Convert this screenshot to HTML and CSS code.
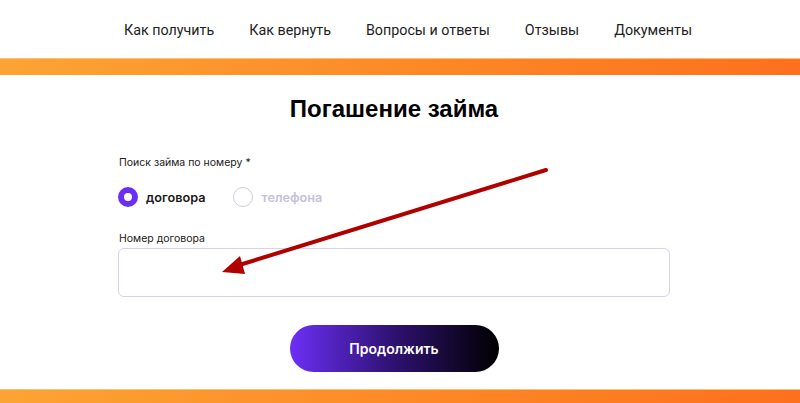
FILE: index.html
```html
<!DOCTYPE html>
<html lang="ru">
<head>
<meta charset="utf-8">
<link rel="stylesheet" href="styles.css">
</head>
<body>
<header class="header">
  <nav class="nav">
    <a class="nav-link">Как получить</a>
    <a class="nav-link">Как вернуть</a>
    <a class="nav-link">Вопросы и ответы</a>
    <a class="nav-link">Отзывы</a>
    <a class="nav-link">Документы</a>
  </nav>
</header>
<div class="bar"></div>
<main class="main">
  <h1 class="title">Погашение займа</h1>
  <div class="form">
    <div class="label">Поиск займа по номеру *</div>
    <div class="radios">
      <label class="radio checked"><span class="dot"></span><span class="radio-text">договора</span></label>
      <label class="radio"><span class="dot"></span><span class="radio-text">телефона</span></label>
    </div>
    <div class="label label-input">Номер договора</div>
    <div class="input"></div>
    <div class="actions"><button class="btn">Продолжить</button></div>
  </div>
</main>
<div class="bar bar-bottom"></div>
<svg class="arrow" width="800" height="403" viewBox="0 0 800 403">
  <line x1="546" y1="170" x2="236" y2="266" stroke="#b00000" stroke-width="4" stroke-linecap="round"/>
  <polygon points="222,272 240,256 245,274" fill="#b00000"/>
</svg>
</body>
</html>
```
FILE: styles.css
```css
* { box-sizing: border-box; }
html, body { margin: 0; padding: 0; background: #fff; }
body { width: 800px; height: 403px; overflow: hidden; position: relative; font-family: Inter, "Noto Sans", sans-serif; color: #1a1a1a; }
.header { height: 58px; display: flex; align-items: center; justify-content: center; padding-left: 16px; }
.nav { display: flex; gap: 35px; padding-top: 1px; }
.nav-link { font-family: Roboto, "Liberation Sans", sans-serif; font-size: 14.3px; color: #1d1d1d; text-decoration: none; }
.bar { height: 17px; background: linear-gradient(90deg, #fca433 0%, #fd8a26 50%, #fd701d 100%); border-top: 1px solid #fcc07a; }
.bar-bottom { height: 20px; margin-top: 17px; }
.main { width: 552px; margin-left: 118px; }
.title { margin: 19px 0 0; text-align: center; font-family: "Liberation Sans", Arial, sans-serif; font-weight: 700; font-size: 24px; line-height: 30px; color: #000; }
.form { margin-top: 32px; }
.label { font-size: 10.5px; line-height: 14px; color: #1a1a1a; margin-left: 1px; }
.radios { display: flex; gap: 28px; margin-top: 17px; height: 20px; align-items: center; }
.radio { display: flex; align-items: center; gap: 8px; }
.dot { width: 20px; height: 20px; border-radius: 50%; border: 1.5px solid #cdc9e3; background: #fff; }
.checked .dot { border: 6px solid #6a2ff4; }
.radio-text { font-size: 12.7px; font-weight: 600; color: #c6c1da; }
.checked .radio-text { color: #1a1a1a; }
.label-input { margin-top: 25px; }
.input { margin-top: 2px; height: 49px; border: 1px solid #d6d2ea; border-radius: 6px; }
.actions { display: flex; justify-content: center; margin-top: 28px; }
.btn { width: 209px; height: 47px; border: 0; border-radius: 24px; background: linear-gradient(90deg, #6c2ff6 0%, #2e1170 50%, #000 100%); color: #fff; font-family: Inter, sans-serif; font-size: 14px; font-weight: 600; }
.arrow { position: absolute; left: 0; top: 0; pointer-events: none; }
```
